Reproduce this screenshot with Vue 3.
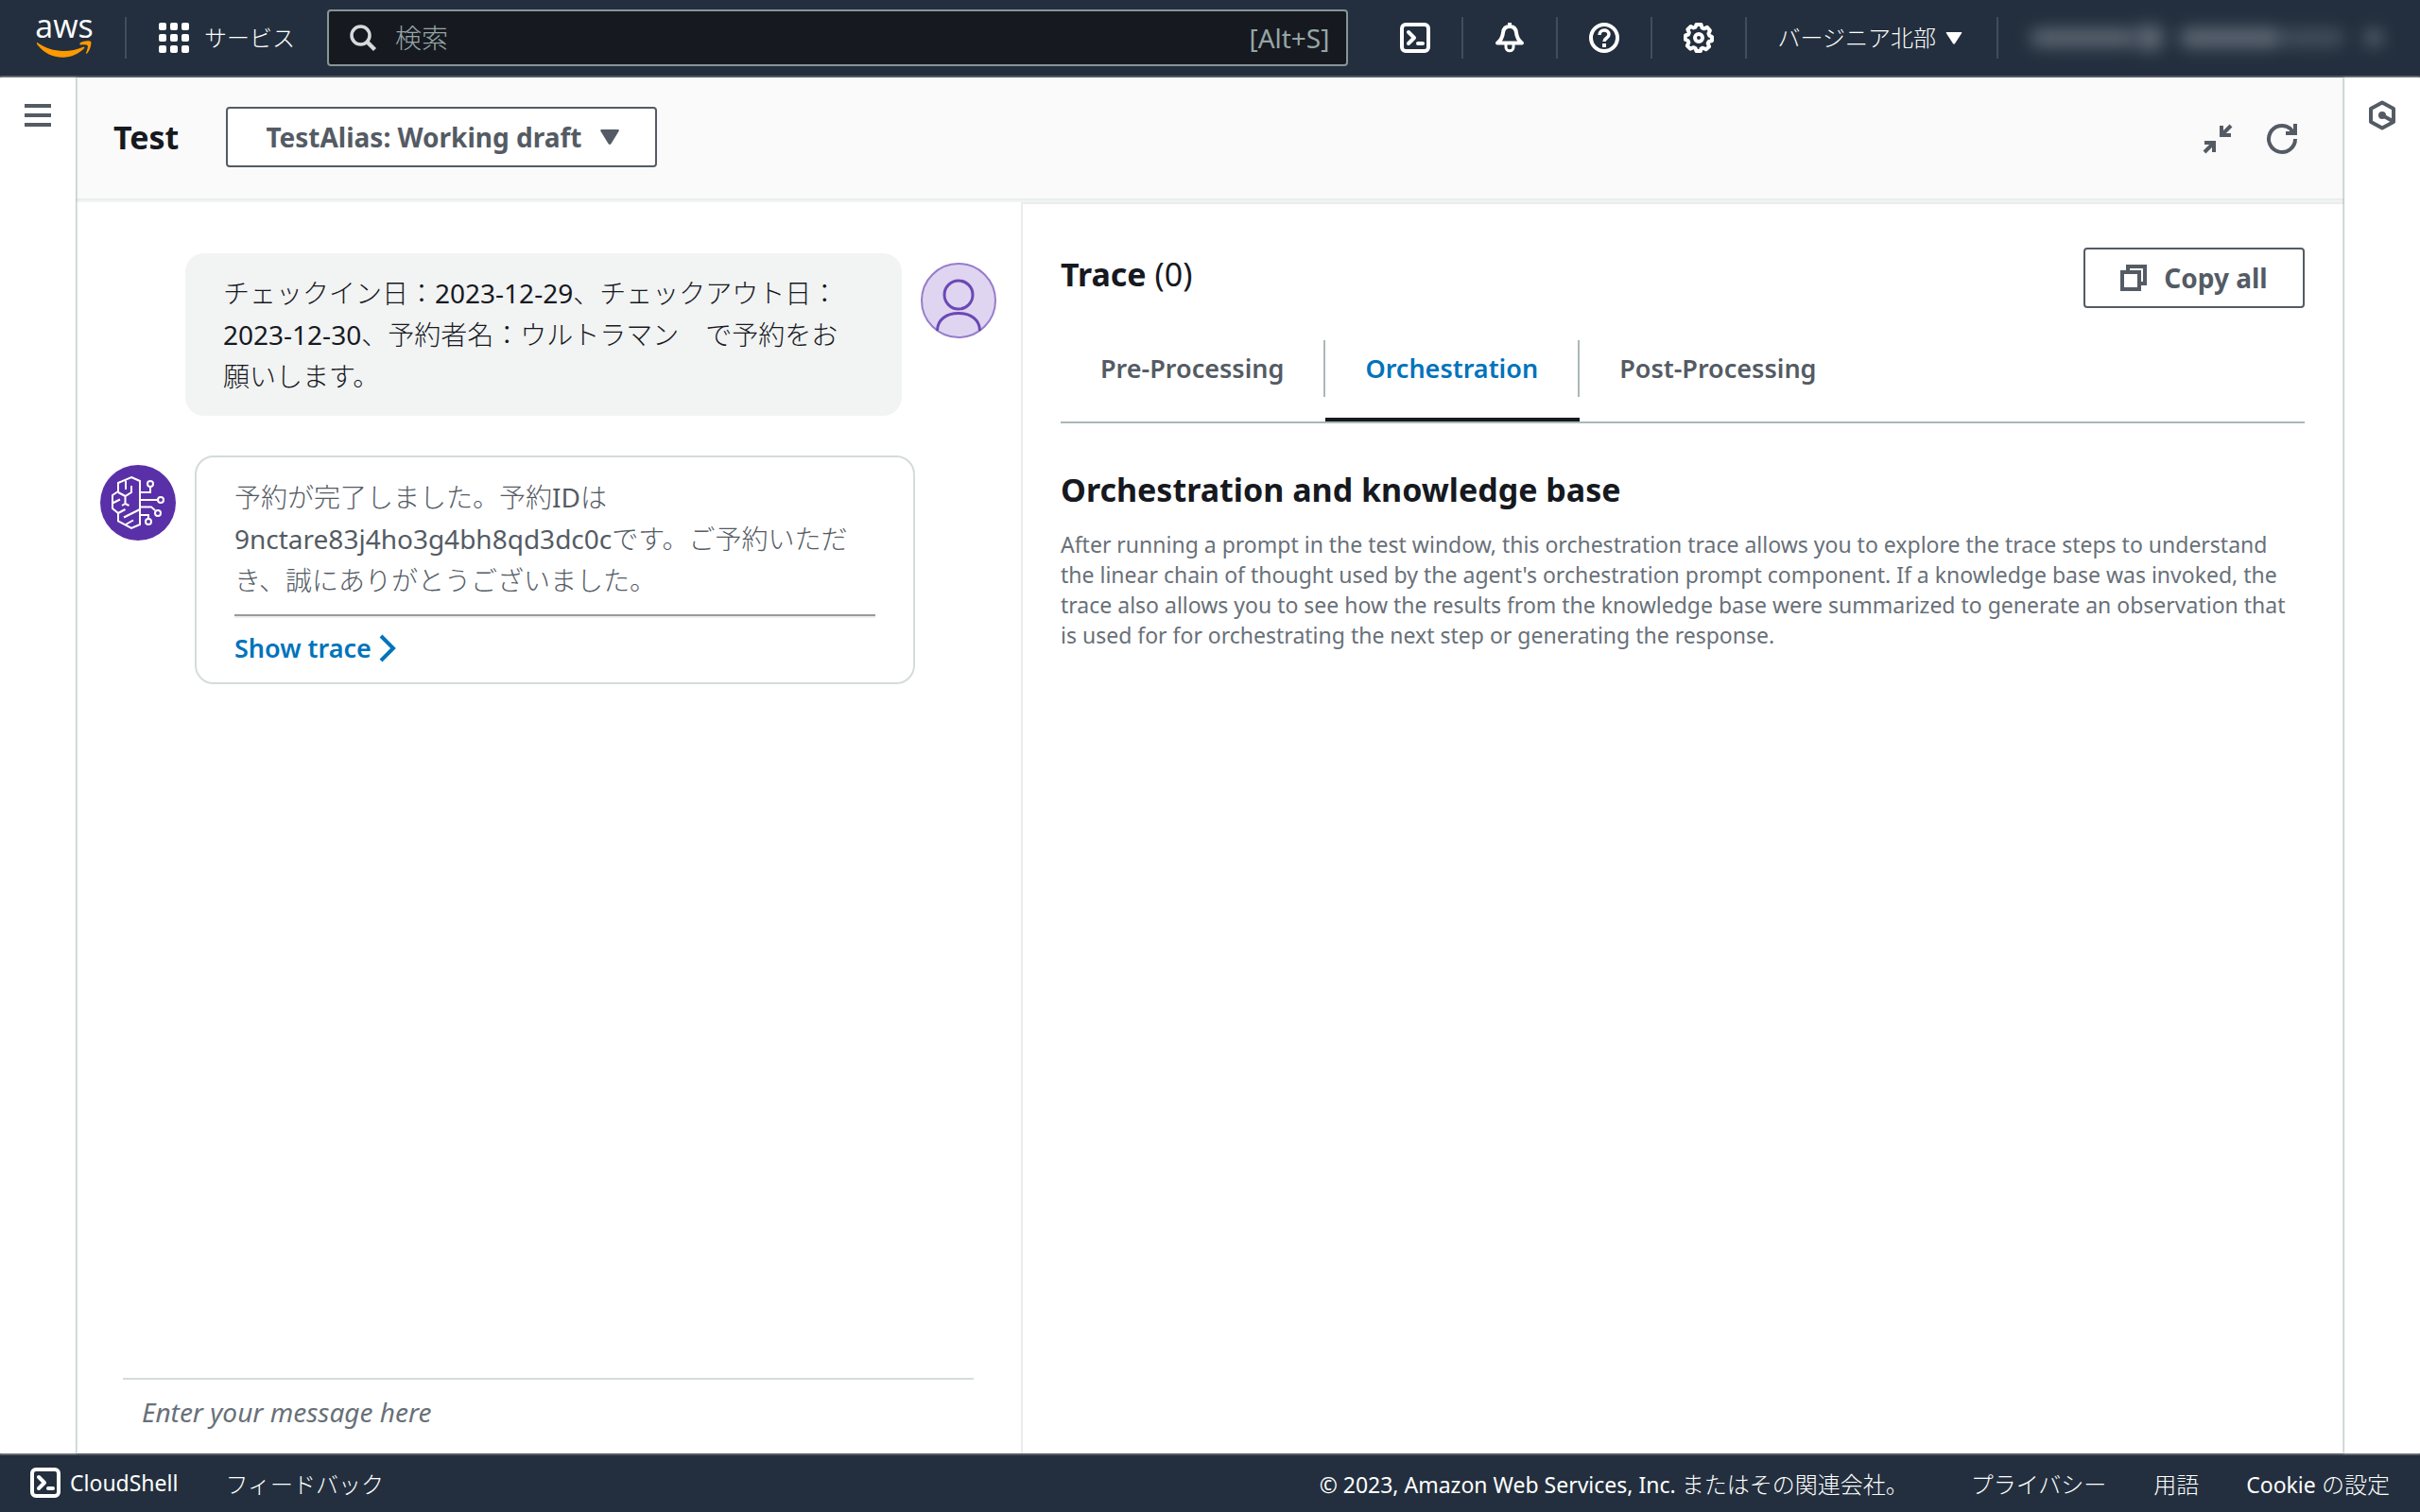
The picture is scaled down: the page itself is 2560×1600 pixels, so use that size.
<script setup>
import { ref } from 'vue'

const alias = ref('working')
const message = ref('')
const query = ref('')
const activeTab = ref('orchestration')
const tabs = [
  { id: 'pre', label: 'Pre-Processing' },
  { id: 'orchestration', label: 'Orchestration' },
  { id: 'post', label: 'Post-Processing' },
]
const gridCells = [0, 12, 24]
</script>

<template>
  <div class="console">
    <header class="topbar">
      <a class="logo" href="#" aria-label="AWS">
        <span class="logo-word">aws</span>
        <svg class="logo-smile" viewBox="0 0 64 22" aria-hidden="true">
          <path d="M1 2.500c9 6.500 19 9.500 30 9.500 8 0 16-1.700 23-4.700 1.200-.5 2.300.8 1.100 1.700C49 15 40 19.500 30.500 19.500 18 19.500 8 14 .6 4.700-.6 3.200 0 1.800 1 2.500z" fill="#f90" />
          <path d="M50.500 2.500C54-.2 62-.4 63 1c1 1.500-.8 10.500-4.700 14-.7.5-1.400.2-1-.6C58.500 11.500 60 6.700 59 5.400c-1-1.200-5.500-.8-8-.5-1 .1-1.400-1.600-.5-2.400z" fill="#f90" />
        </svg>
      </a>
      <span class="rule"></span>
      <button class="services" type="button">
        <svg class="icon" viewBox="0 0 32 32" aria-hidden="true">
          <template v-for="y in gridCells" :key="y">
            <rect v-for="x in gridCells" :key="x" :x="x" :y="y" width="8" height="8" rx="2" fill="#fff" />
          </template>
        </svg>
        <span class="nav-text">サービス</span>
      </button>
      <label class="search">
        <svg class="icon-search" viewBox="0 0 28 28" fill="none" stroke="#d5dbdb" aria-hidden="true">
          <circle cx="11.500" cy="11.500" r="9.500" stroke-width="3.500" />
          <path d="M18.500 18.500l8 8" stroke-width="4.500" />
        </svg>
        <input v-model="query" type="text" placeholder="検索" aria-label="検索" />
        <span class="hint">[Alt+S]</span>
      </label>
      <nav class="tools">
        <button type="button" class="tool" aria-label="CloudShell">
          <svg class="icon" viewBox="0 0 32 32" fill="none" stroke="#fff" stroke-width="4" aria-hidden="true">
            <rect x="2" y="2" width="28" height="28" rx="4" />
            <path d="M9 10l6 6-6 6" stroke-linecap="round" stroke-linejoin="round" />
            <path d="M19 22h5" stroke-linecap="round" />
          </svg>
        </button>
        <button type="button" class="tool" aria-label="通知">
          <svg class="icon" viewBox="0 0 32 32" fill="none" stroke="#fff" stroke-width="4" stroke-linejoin="round" aria-hidden="true">
            <path d="M16 0v3M3 21.500c4-3 5.500-6 6-11C9.500 6 12 4 16 4s6.500 2 7 6.500c.5 5 2 8 6 11z" />
            <path d="M12 22v4c0 5 8 5 8 0v-4" stroke-width="3" />
          </svg>
        </button>
        <button type="button" class="tool" aria-label="ヘルプ">
          <svg class="icon" viewBox="0 0 32 32" fill="none" stroke="#fff" stroke-width="4" aria-hidden="true">
            <circle cx="16" cy="16" r="14" />
            <path d="M11 13c0-6.500 10-6.500 10-.5 0 4-5 3.500-5 7.500" stroke-width="3.500" />
            <path d="M16 22v4" />
          </svg>
        </button>
        <button type="button" class="tool" aria-label="設定">
          <svg class="icon" viewBox="0 0 32 32" fill="none" stroke="#fff" stroke-width="4" stroke-linejoin="round" aria-hidden="true">
            <path d="M13.500 2h5l1 3.500 2 .8 3.400-1.500 3 3.600-1.500 3.200.8 2L30 15v4l-3.300 1-1 2 1.400 3.300-3.400 3-3.300-1.600-2 .8L18 30h-4.500l-1-3-2-.8-3.400 1.500-3.300-3.300L5.400 21l-.8-2L2 18v-4.500l3-1 .8-2-1.500-3.300 3.300-3.200 3 1.500 2-.8z" />
            <circle cx="16" cy="16" r="4" />
          </svg>
        </button>
        <button type="button" class="region">
          <span class="nav-text">バージニア北部</span>
          <svg class="caret-sm" viewBox="0 0 16 12" aria-hidden="true"><path d="M1 0h14q1 0 .6 1L9 11q-1 1.500-2 0L.4 1Q0 0 1 0z" fill="#fff" /></svg>
        </button>
      </nav>
      <button type="button" class="account" aria-label="アカウント">
        <span class="smudge name"></span>
        <span class="smudge at"></span>
        <span class="smudge id"></span>
        <span class="smudge tail"></span>
        <span class="smudge mark"></span>
      </button>
    </header>

    <div class="body">
      <aside class="rail left">
        <button type="button" class="menu" aria-label="メニューを開く"><i></i><i></i><i></i></button>
      </aside>

      <main class="main">
        <div class="test-head">
          <h1>Test</h1>
          <div class="select-wrap">
            <select v-model="alias" aria-label="Alias">
              <option value="working">TestAlias: Working draft</option>
            </select>
            <svg class="caret" viewBox="0 0 20 16" aria-hidden="true"><path d="M1.500 0h17q2 0 1 2l-8 13q-1.500 2-3 0L.5 2q-1-2 1-2z" fill="#545b64" /></svg>
          </div>
          <div class="head-actions">
            <button type="button" aria-label="Collapse">
              <svg class="icon" viewBox="0 0 32 32" fill="none" stroke="#545b64" stroke-width="4" aria-hidden="true">
                <path d="M20 2v10h10M20.500 11.500L30 2M2 20h10v10M11.500 20.500L2 30" />
              </svg>
            </button>
            <button type="button" aria-label="Refresh">
              <svg class="icon" viewBox="0 0 32 32" fill="none" stroke="#545b64" stroke-width="4" aria-hidden="true">
                <path d="M30 16a14 14 0 1 1-5-10.700L28 9.500M30 0v10H20" />
              </svg>
            </button>
          </div>
        </div>

        <div class="panes">
          <section class="chat">
            <div class="row user">
              <p class="bubble">チェックイン日：<b>2023-12-29</b>、チェックアウト日：<br /><b>2023-12-30</b>、予約者名：ウルトラマン　で予約をお<br />願いします。</p>
              <svg class="avatar" viewBox="0 0 80 80" fill="none" aria-hidden="true">
                <circle cx="40" cy="40" r="39" fill="#dfd5f0" stroke="#977ccb" stroke-width="2" />
                <circle cx="40" cy="34" r="15" stroke="#6b48b5" stroke-width="3" />
                <path d="M17.500 72c0-12 10-18.500 22.500-18.500S62.500 60 62.500 72" stroke="#6b48b5" stroke-width="3" />
              </svg>
            </div>
            <div class="row bot">
              <svg class="avatar" viewBox="0 0 80 80" fill="none" stroke="#fff" stroke-width="2" aria-hidden="true">
                <circle cx="40" cy="40" r="40" fill="#5a30a8" stroke="none" />
                <path d="M33 13l9 4v46l-9 4-14-7.500V51l-6-5V32l6-4v-9z" />
                <path d="M27 16.500V26M33 22v7l-6.500 4-7.500-4M26.500 33v8M23 43l3.500-2 4 2M13 40.500l8-4M19 51l7.500-4M25 55.500l17-8.500M27 63l8-4.500" />
                <path d="M42 29h11v-6M42 37h19M42 44.500h12l4 3.500M42 53h9v3" />
                <circle cx="53" cy="20" r="3" /><circle cx="64" cy="37" r="3" /><circle cx="61" cy="51" r="3" /><circle cx="51" cy="60" r="3" />
              </svg>
              <div class="bubble">
                <p>予約が完了しました。予約<b>ID</b>は<br /><b>9nctare83j4ho3g4bh8qd3dc0c</b>です。ご予約いただ<br />き、誠にありがとうございました。</p>
                <hr />
                <a class="show-trace" href="#">Show trace
                  <svg viewBox="0 0 18 30" fill="none" stroke="#0073bb" stroke-width="4" aria-hidden="true"><path d="M2 2l13 13L2 28" /></svg>
                </a>
              </div>
            </div>
            <input v-model="message" class="composer" type="text" placeholder="Enter your message here" aria-label="Message" />
          </section>

          <section class="trace">
            <div class="trace-head">
              <h2>Trace <span>(0)</span></h2>
              <button type="button" class="copy">
                <svg viewBox="0 0 28 28" fill="none" stroke="#545b64" stroke-width="4" aria-hidden="true">
                  <path d="M2 8h18v18H2z" /><path d="M8 8V2h18v18h-6" />
                </svg>
                Copy all
              </button>
            </div>
            <div class="tabs" role="tablist">
              <button
                v-for="t in tabs" :key="t.id" type="button" role="tab"
                :aria-selected="activeTab === t.id"
                :class="{ active: activeTab === t.id }"
                @click="activeTab = t.id"
              ><span>{{ t.label }}</span></button>
            </div>
            <h3>Orchestration and knowledge base</h3>
            <p class="desc">After running a prompt in the test window, this orchestration trace allows you to explore the trace steps to understand<br />the linear chain of thought used by the agent's orchestration prompt component. If a knowledge base was invoked, the<br />trace also allows you to see how the results from the knowledge base were summarized to generate an observation that<br />is used for for orchestrating the next step or generating the response.</p>
          </section>
        </div>
      </main>

      <aside class="rail right">
        <button type="button" class="assistant" aria-label="Amazon Q">
          <svg viewBox="0 0 30 32" fill="none" stroke="#545b64" stroke-width="4" stroke-linejoin="round" aria-hidden="true">
            <path d="M15 2.500l12 6.500v14l-12 6.500L3 23V9z" />
            <path d="M15 16l11 6" /><circle cx="15" cy="16" r="2" />
          </svg>
        </button>
      </aside>
    </div>

    <footer class="footer">
      <a href="#" class="shell">
        <svg class="icon" viewBox="0 0 32 32" fill="none" stroke="#fff" stroke-width="4" aria-hidden="true">
          <rect x="2" y="2" width="28" height="28" rx="4" />
          <path d="M9 10l6 6-6 6" stroke-linecap="round" stroke-linejoin="round" />
          <path d="M19 22h5" stroke-linecap="round" />
        </svg>
        <b>CloudShell</b>
      </a>
      <a href="#">フィードバック</a>
      <span class="copyright"><b>© 2023, Amazon Web Services, Inc. </b>またはその関連会社。</span>
      <a href="#">プライバシー</a>
      <a href="#">用語</a>
      <a href="#"><b>Cookie</b> の設定</a>
    </footer>
  </div>
</template>

<style>
body {
  margin: 0;
}
</style>

<style scoped>
.console {
  display: flex;
  flex-direction: column;
  min-height: 100vh;
  background: #fff;
  color: #16191f;
  font-family: "Noto Sans", "Noto Sans CJK JP", sans-serif;
  font-size: 28px;
}
.console * {
  box-sizing: border-box;
}
h1, h2, h3, p {
  margin: 0;
}
b {
  font-weight: 400;
}
button, input, select {
  font: inherit;
  color: inherit;
  background: none;
  border: 0;
  padding: 0;
}
a {
  color: inherit;
  text-decoration: none;
}
svg {
  display: block;
  flex: none;
  overflow: visible;
}
.icon {
  width: 32px;
  height: 32px;
}

.topbar {
  display: flex;
  align-items: center;
  height: 82px;
  padding: 0 32px 2px 36px;
  background: #232f3e;
  box-shadow: inset 0 -2px #545b64;
  color: #fff;
  font-size: 24px;
}
.logo {
  width: 64px;
  height: 44px;
}
.logo-word {
  display: block;
  height: 25px;
  font-family: "Open Sans", sans-serif;
  font-size: 34px;
  font-weight: 500;
  line-height: 18px;
  text-align: center;
}
.logo-smile {
  width: 64px;
  height: 20px;
}
.rule {
  width: 2px;
  height: 44px;
  margin: 0 34px 0 32px;
  background: #414d5c;
}
.services {
  display: flex;
  align-items: center;
  gap: 16px;
}
.nav-text {
  padding-bottom: 4px;
  font-weight: 300;
}
.search {
  display: flex;
  align-items: center;
  flex: 1;
  height: 60px;
  margin-left: 34px;
  padding: 0 18px 0 22px;
  border: 2px solid #879596;
  border-radius: 4px;
  background: #16191f;
  color: #95a5a6;
  font-size: 28px;
  font-weight: 300;
}
.search input {
  flex: 1;
  min-width: 0;
  margin-left: 20px;
  outline: 0;
}
.search input::placeholder {
  color: #95a5a6;
  opacity: 1;
}
.icon-search {
  width: 28px;
  height: 28px;
}
.hint {
  font-weight: 400;
}
.tools {
  display: flex;
  align-items: center;
  margin-left: 22px;
}
.tool {
  display: flex;
  align-items: center;
  justify-content: center;
  width: 100px;
  height: 44px;
  border-right: 2px solid #414d5c;
}
.region {
  display: flex;
  align-items: center;
  gap: 10px;
  height: 44px;
  padding: 0 36px 0 32px;
  border-right: 2px solid #414d5c;
}
.caret-sm {
  width: 18px;
  height: 13px;
}
.account {
  display: flex;
  align-items: center;
  width: 380px;
  margin-left: 34px;
}
.smudge {
  height: 18px;
  border-radius: 8px;
  background: #7b838e;
  filter: blur(9px);
  opacity: 0.7;
}
.name {
  width: 112px;
}
.at {
  width: 28px;
  height: 26px;
  margin-right: 18px;
}
.id {
  width: 108px;
  height: 20px;
}
.tail {
  width: 66px;
  margin-right: 22px;
  opacity: 0.4;
}
.mark {
  width: 18px;
}

.body {
  display: flex;
  flex: 1;
}
.rail {
  flex: none;
  width: 80px;
  background: #fff;
  z-index: 1;
}
.left {
  box-shadow: 1px 0 2px #aab7b8;
}
.right {
  box-shadow: -1px 0 2px #aab7b8;
}
.menu {
  display: flex;
  flex-direction: column;
  gap: 6px;
  width: 28px;
  margin: 28px 26px;
}
.menu i {
  height: 4px;
  background: #545b64;
}
.assistant {
  margin: 24px 25px;
}
.assistant svg {
  width: 30px;
  height: 32px;
}

.main {
  display: flex;
  flex: 1;
  flex-direction: column;
  min-width: 0;
}
.test-head {
  display: flex;
  align-items: center;
  height: 132px;
  padding: 0 50px 4px 40px;
  background: #fafafa;
  border-bottom: 2px solid #f2f3f3;
  box-shadow: inset 0 -2px #eaeded;
}
h1, h2, h3 {
  font-size: 34px;
  line-height: 44px;
  font-weight: 700;
}
.select-wrap {
  display: flex;
  align-items: center;
  width: 456px;
  height: 64px;
  margin-left: 50px;
  border: 2px solid #545b64;
  border-radius: 4px;
  background: #fff;
  color: #545b64;
}
select {
  width: 100%;
  height: 60px;
  margin-right: -58px;
  padding-left: 40px;
  appearance: none;
  font-weight: 700;
}
.caret {
  width: 20px;
  height: 16px;
  pointer-events: none;
}
.head-actions {
  display: flex;
  gap: 36px;
  margin: 4px 0 0 auto;
}

.panes {
  display: grid;
  flex: 1;
  grid-template-columns: minmax(0, 1000fr) minmax(0, 1400fr);
}
.chat {
  display: flex;
  flex-direction: column;
  padding: 54px 26px 0;
}
.row {
  display: flex;
  gap: 20px;
}
.user {
  padding-left: 90px;
}
.bot {
  margin-top: 42px;
  padding-right: 86px;
}
.avatar {
  width: 80px;
  height: 80px;
  margin-top: 10px;
}
.bubble {
  flex: 1;
  padding: 20px 40px;
  border-radius: 20px;
  font-weight: 300;
  line-height: 44px;
  white-space: nowrap;
}
.user .bubble {
  background: #f2f3f3;
}
.bot .bubble {
  border: 2px solid #d5dbdb;
  color: #545b64;
}
hr {
  height: 4px;
  margin: 14px 0 16px;
  border: 0;
  border-top: 2px solid #9a9a9a;
  background: #eee;
}
.show-trace {
  display: flex;
  align-items: center;
  gap: 8px;
  height: 32px;
  color: #0073bb;
  font-size: 27px;
  font-weight: 600;
}
.show-trace svg {
  width: 18px;
  height: 30px;
}
.composer {
  height: 80px;
  margin: auto 24px 0;
  padding: 0 20px 10px;
  border-top: 2px solid #d5dbdb;
  outline: 0;
}
.composer::placeholder {
  color: #687078;
  font-style: italic;
  opacity: 1;
}

.trace {
  padding: 46px 42px 0 40px;
  border-left: 2px solid #eaeded;
  border-top: 2px solid #eaeded;
}
.trace-head {
  display: flex;
  align-items: flex-start;
  justify-content: space-between;
}
h2 {
  margin-top: 6px;
}
h2 span {
  font-weight: 400;
}
.copy {
  display: flex;
  align-items: center;
  justify-content: center;
  gap: 18px;
  width: 234px;
  height: 64px;
  border: 2px solid #545b64;
  border-radius: 4px;
  color: #545b64;
  font-weight: 700;
}
.copy svg {
  width: 28px;
  height: 28px;
}
.tabs {
  display: flex;
  margin-top: 34px;
  border-bottom: 2px solid #aab7b8;
}
.tabs button {
  height: 86px;
  padding-bottom: 22px;
  border-bottom: 4px solid transparent;
  color: #545b64;
  font-size: 27px;
  font-weight: 600;
}
.tabs span {
  display: block;
  padding: 0 42px;
  line-height: 60px;
  border-right: 2px solid #aab7b8;
}
.tabs button:last-child span {
  border-right: 0;
}
.tabs .active {
  border-bottom-color: #16191f;
  color: #0073bb;
}
h3 {
  margin-top: 48px;
}
.desc {
  margin-top: 20px;
  color: #687078;
  font-size: 23px;
  line-height: 32px;
  white-space: nowrap;
}

.footer {
  display: flex;
  align-items: center;
  gap: 50px;
  height: 62px;
  padding: 0 32px 2px;
  background: #232f3e;
  border-top: 2px solid #545b64;
  color: #fff;
  font-size: 24px;
  font-weight: 300;
}
.footer b {
  font-size: 23px;
}
.shell {
  display: flex;
  align-items: center;
  gap: 10px;
}
.copyright {
  margin: 0 16px 0 auto;
  white-space: pre;
}
</style>
